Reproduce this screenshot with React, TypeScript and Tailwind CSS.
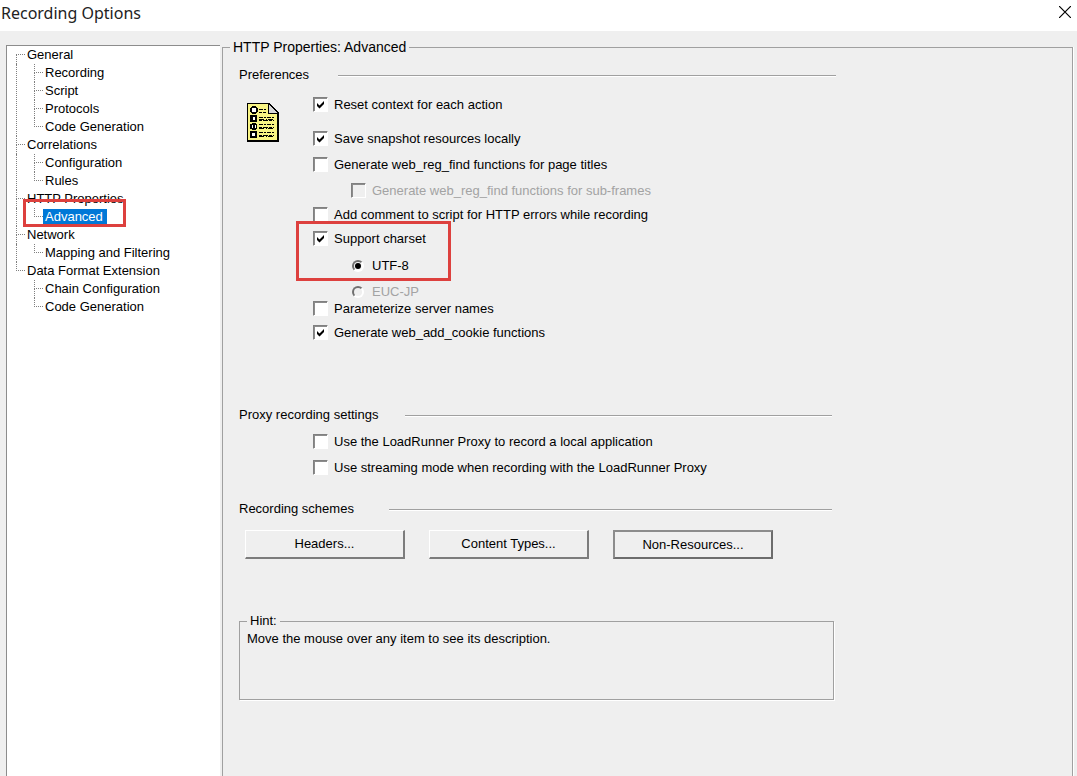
type TreeNode = {
  label: string;
  children: string[];
};

const tree: TreeNode[] = [
  { label: "General", children: ["Recording", "Script", "Protocols", "Code Generation"] },
  { label: "Correlations", children: ["Configuration", "Rules"] },
  { label: "HTTP Properties", children: ["Advanced"] },
  { label: "Network", children: ["Mapping and Filtering"] },
  { label: "Data Format Extension", children: ["Chain Configuration", "Code Generation"] },
];

const Connector = ({ first, last }: { first?: boolean; last?: boolean }) => (
  <span className="flex h-[18px] w-[9px] shrink-0 flex-col">
    <span className={`h-[9px] border-b border-dotted border-[#808080] ${first ? "" : "border-l"}`} />
    <span className={`h-[9px] border-dotted border-[#808080] ${last ? "" : "border-l"}`} />
  </span>
);

const Tree = () => (
  <ul className="pl-[9px]">
    {tree.map((node, i) => {
      const lastRoot = i === tree.length - 1;
      return (
        <li key={node.label}>
          <div className="flex h-[18px] items-center">
            <Connector first={i === 0} last={lastRoot} />
            <span className="px-[2px]">{node.label}</span>
          </div>
          <ul className={`border-dotted border-[#808080] ${lastRoot ? "pl-[18px]" : "border-l pl-[17px]"}`}>
            {node.children.map((child, j) => {
              const selected = child === "Advanced";
              return (
                <li key={child} className="relative flex h-[18px] items-center">
                  <Connector last={j === node.children.length - 1} />
                  <span className={selected ? "bg-[#0078d7] pl-[2px] pr-1 text-white" : "px-[2px]"}>{child}</span>
                  {selected && (
                    <span className="pointer-events-none absolute -left-[11px] -top-[9px] h-[28px] w-[103px] border-3 border-[#dd403e]" />
                  )}
                </li>
              );
            })}
          </ul>
        </li>
      );
    })}
  </ul>
);

type OptionProps = {
  id: string;
  label: string;
  checked?: boolean;
  disabled?: boolean;
  className?: string;
};

const Checkbox = ({ id, label, checked, disabled, className = "" }: OptionProps) => (
  <div className={`flex h-4 items-center gap-[6px] ${className}`}>
    <span className="-mt-[2px] grid shrink-0">
      <input
        type="checkbox"
        id={id}
        defaultChecked={checked}
        disabled={disabled}
        className="peer col-start-1 row-start-1 size-[15px] appearance-none border border-l-[#808080] border-t-[#808080] border-b-white border-r-white bg-white shadow-[inset_1px_1px_0_#8c8c8c] disabled:bg-[#efefef]"
      />
      <svg viewBox="0 0 15 15" className="pointer-events-none col-start-1 row-start-1 hidden size-[15px] peer-checked:block">
        <path d="M4 6v3l2.500 2.500L11 7V4L6.500 8.500z" fill="#000" />
      </svg>
    </span>
    <label htmlFor={id} className={disabled ? "text-[#a3a3a3]" : ""}>
      {label}
    </label>
  </div>
);

const Radio = ({ id, label, checked, disabled, className = "" }: OptionProps) => (
  <div className={`flex h-4 items-center gap-2 ${className}`}>
    <span className="grid shrink-0 place-items-center">
      <input
        type="radio"
        name="charset"
        id={id}
        defaultChecked={checked}
        disabled={disabled}
        className="peer col-start-1 row-start-1 size-3 appearance-none rounded-full border-2 border-b-white border-l-[#707070] border-r-white border-t-[#707070] bg-[#f6f6f6] disabled:bg-[#efefef]"
      />
      <span className="pointer-events-none col-start-1 row-start-1 hidden size-[6px] rounded-full bg-black peer-checked:block" />
    </span>
    <label htmlFor={id} className={disabled ? "text-[#a3a3a3]" : ""}>
      {label}
    </label>
  </div>
);

type SectionTitleProps = {
  title: string;
  titleClass: string;
  className?: string;
};

const SectionTitle = ({ title, titleClass, className = "" }: SectionTitleProps) => (
  <div className={`flex h-4 items-center ${className}`}>
    <h2 className={`shrink-0 whitespace-nowrap ${titleClass}`}>{title}</h2>
    <span className="mt-[2px] h-[2px] flex-1 border-b border-b-white bg-[#a0a0a0]" />
  </div>
);

const ListIcon = () => (
  <svg viewBox="0 0 32 39" className="h-[39px] w-8" shapeRendering="crispEdges">
    <path d="M0 0h22l10 10v29H0z" fill="#000" />
    <path d="M1 1h20v10h9v26H1z" fill="#f8f484" />
    <path d="M22 2l8 8h-8z" fill="#d8d8d8" />
    {/* bullets */}
    <g fill="#000">
      <path d="M5 3h4v1h1v1h1v4h-1v1H9v1H5v-1H4V9H3V5h1V4h1z" />
      <path d="M3 12h7v7H3z" />
      <path d="M5 20h4v1h1v5H9v1H5v-1H3v-5h2z" />
      <path d="M3 28h7v7H3z" />
    </g>
    <g fill="#fff">
      <path d="M5 5h4v4H5zM6 14h2v3H6zM5 22h1v3H5zM8 22h1v3H8zM5 30h3v3H5z" />
    </g>
    {/* lines of text */}
    <g fill="none" stroke="#000" strokeWidth="1">
      <path d="M12 6.500h7M12 14.500h15M12 21.500h15M12 29.500h15" strokeDasharray="4 1 2 1" />
      <path d="M12 9.500h7M12 17.500h15M12 24.500h15M12 32.500h15" strokeDasharray="3 1 5 1" />
      <path d="M12 16.500h15M12 25.500h15M12 33.500h15" strokeDasharray="5 2 1 1" />
    </g>
  </svg>
);

const buttonClass =
  "h-[29px] w-40 border border-b-2 border-r-2 border-b-[#7c7c7c] border-l-white border-r-[#7c7c7c] border-t-white bg-[#efefef]";

export default function App() {
  return (
    <div className="flex min-h-screen flex-col bg-[#efefef] font-['Liberation_Sans',Arial,sans-serif] text-[13px] leading-4 text-black">
      <header className="flex h-[31px] items-start justify-between bg-white pl-px pr-[6px]">
        <h1 className="font-['Noto_Sans',sans-serif] text-[16px] leading-[26px] text-[#222]">Recording Options</h1>
        <button type="button" aria-label="Close" className="mt-[6px]">
          <svg viewBox="0 0 12 12" className="size-3">
            <path d="M0 0l12 12M12 0L0 12" stroke="#000" strokeWidth="1.200" />
          </svg>
        </button>
      </header>

      <main className="flex flex-1 pl-[6px] pr-1">
        <nav className="mt-[14px] w-[214px] shrink-0 border-l border-t border-[#8c8c8c] bg-white">
          <Tree />
        </nav>

        <fieldset className="ml-[2px] mt-[8px] min-w-0 flex-1 border border-b-0 border-[#a0a0a0] shadow-[1px_0_0_#fff]">
          <legend className="ml-[7px] px-[3px] text-[14px] leading-4">HTTP Properties: Advanced</legend>

          <div className="max-w-[613px] pl-4">
            <SectionTitle title="Preferences" titleClass="w-[99px]" className="mt-[12px]" />
            <div className="flex pt-[14px]">
              <div className="w-[74px] shrink-0 pl-2 pt-[6px]">
                <ListIcon />
              </div>
              <div className="min-w-0 flex-1">
                <Checkbox id="reset" label="Reset context for each action" checked />
                <Checkbox id="snapshot" label="Save snapshot resources locally" checked className="mt-[18px]" />
                <Checkbox id="titles" label="Generate web_reg_find functions for page titles" className="mt-[10px]" />
                <Checkbox
                  id="subframes"
                  label="Generate web_reg_find functions for sub-frames"
                  disabled
                  className="ml-[38px] mt-[10px]"
                />
                <Checkbox id="comment" label="Add comment to script for HTTP errors while recording" className="mt-[8px]" />
                <div className="relative mt-[8px]">
                  <Checkbox id="charset" label="Support charset" checked />
                  <Radio id="utf8" label="UTF-8" checked className="ml-[39px] mt-[11px]" />
                  <span className="pointer-events-none absolute -left-[17px] -top-[10px] h-[60px] w-[155px] border-3 border-[#dd403e]" />
                </div>
                <Radio id="eucjp" label="EUC-JP" disabled className="ml-[39px] mt-[10px]" />
                <Checkbox id="parameterize" label="Parameterize server names" className="mt-px" />
                <Checkbox id="cookie" label="Generate web_add_cookie functions" checked className="mt-[8px]" />
              </div>
            </div>

            <SectionTitle title="Proxy recording settings" titleClass="w-[166px]" className="mr-1 mt-[66px]" />
            <div className="pl-[74px] pt-[11px]">
              <Checkbox id="local" label="Use the LoadRunner Proxy to record a local application" />
              <Checkbox
                id="streaming"
                label="Use streaming mode when recording with the LoadRunner Proxy"
                className="mt-[10px]"
              />
            </div>

            <SectionTitle title="Recording schemes" titleClass="w-[150px]" className="mr-1 mt-[25px]" />
            <div className="flex gap-6 pl-[6px] pt-[13px]">
              <button type="button" className={buttonClass}>
                Headers...
              </button>
              <button type="button" className={buttonClass}>
                Content Types...
              </button>
              <button
                type="button"
                className="h-[29px] w-40 border-2 border-[#6c6c6c] border-l-[#8c8c8c] border-t-[#8c8c8c] bg-[#efefef]"
              >
                Non-Resources...
              </button>
            </div>

            <fieldset className="mr-[2px] mt-[54px] h-[87px] border border-[#a0a0a0] shadow-[1px_1px_0_#fff]">
              <legend className="ml-[7px] px-[3px]">Hint:</legend>
              <p className="px-[7px] pt-[2px]">Move the mouse over any item to see its description.</p>
            </fieldset>
          </div>
        </fieldset>
      </main>
    </div>
  );
}
